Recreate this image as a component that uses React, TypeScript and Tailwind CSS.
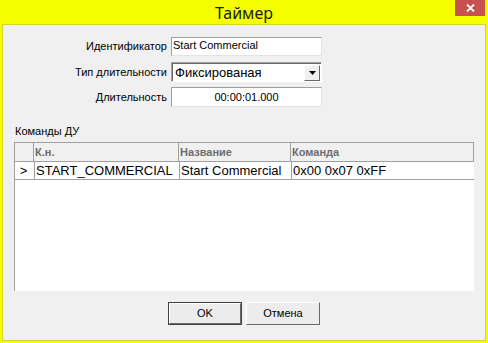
import React from "react";

const ui = { fontFamily: '"Liberation Sans", Arial, sans-serif' };

function Label({ children }: { children: React.ReactNode }) {
  return (
    <div className="w-[168px] pr-[4px] text-right text-[11px] leading-[13px] text-black" style={ui}>
      {children}
    </div>
  );
}

function Button({ label, primary = false }: { label: string; primary?: boolean }) {
  return (
    <div
      className={
        primary
          ? "h-[23px] w-[74px] border border-[#404040] bg-[#f0f0f0]"
          : "h-[23px] w-[74px]"
      }
    >
      <div className="flex h-full w-full items-center justify-center border-t border-l border-r border-b border-t-white border-l-white border-r-[#696969] border-b-[#696969] bg-[#ececec] text-[11px] text-black" style={ui}>
        {label}
      </div>
    </div>
  );
}

export default function App() {
  return (
    <div className="flex h-[343px] w-[488px] flex-col bg-[#f5ff00]" style={ui}>
      {/* title bar */}
      <div className="relative flex h-[24px] items-center justify-center">
        <span
          className="mt-[1px] text-[16px] text-[#1a1a1a]"
          style={{ fontFamily: '"Noto Sans", "Open Sans", sans-serif' }}
        >
          Таймер
        </span>
        <div className="absolute right-[3px] top-0 flex h-[16px] w-[30px] items-center justify-center bg-[#c75050]">
          <svg width="9" height="8" viewBox="0 0 9 8">
            <path d="M1 0.5 L8 7.5 M8 0.5 L1 7.5" stroke="white" strokeWidth="1.8" />
          </svg>
        </div>
      </div>

      {/* client */}
      <div className="mx-[2px] mb-[2px] flex flex-1 flex-col border border-[#d3d62a] bg-[#f0f0f0]">
        <div className="flex flex-col pt-[12px]">
          <div className="flex h-[19px] items-center">
            <Label>Идентификатор</Label>
            <div className="h-[19px] w-[151px] border-t border-l border-r border-b border-t-[#a0a0a0] border-l-[#a0a0a0] border-r-[#e3e3e3] border-b-[#e3e3e3] bg-white pl-[1px] text-[11px] leading-[15px] text-black">
              Start Commercial
            </div>
          </div>

          <div className="mt-[6px] flex h-[20px] items-center">
            <Label>Тип длительности</Label>
            <div className="flex h-[20px] w-[151px] items-center border-t border-l border-r border-b border-t-[#a0a0a0] border-l-[#a0a0a0] border-r-white border-b-white bg-white">
              <div className="flex h-full flex-1 items-center border-t border-l border-t-[#696969] border-l-[#696969] pl-[2px] text-[13px] text-black">
                Фиксированая
              </div>
              <div className="flex h-full items-center border-t border-t-[#696969] pr-[1px]">
                <div className="flex h-[16px] w-[16px] items-center justify-center border-t border-l border-r border-b border-t-white border-l-white border-r-[#696969] border-b-[#696969] bg-[#f0f0f0]">
                  <svg width="7" height="4" viewBox="0 0 7 4">
                    <path d="M0 0 H7 L3.5 4 Z" fill="black" />
                  </svg>
                </div>
              </div>
            </div>
          </div>

          <div className="mt-[5px] flex h-[20px] items-center">
            <Label>Длительность</Label>
            <div className="flex h-[20px] w-[151px] items-center justify-center border-t border-l border-r border-b border-t-[#a0a0a0] border-l-[#a0a0a0] border-r-[#e3e3e3] border-b-[#e3e3e3] bg-white text-[11px] text-black">
              00:00:01.000
            </div>
          </div>
        </div>

        <div className="mt-[18px] pl-[12px] text-[11px] leading-[13px] text-black">Команды ДУ</div>

        {/* grid */}
        <div className="mx-[11px] mt-[4px] flex h-[149px] flex-col border-t border-l border-[#a0a0a0] bg-white">
          <div className="flex h-[19px] border-b border-r border-[#a0a0a0] bg-[#f0f0f0] text-[11px] font-bold text-[#6d6d6d]">
            <div className="w-[19px] border-r border-[#a0a0a0]" />
            <div className="flex w-[145px] items-center border-r border-[#a0a0a0] pl-[1px]">К.н.</div>
            <div className="flex w-[112px] items-center border-r border-[#a0a0a0] pl-[1px]">Название</div>
            <div className="flex flex-1 items-center pl-[1px]">Команда</div>
          </div>
          <div className="flex h-[18px] items-center border-b border-[#a0a0a0] text-[13px] text-black">
            <div className="flex h-full w-[20px] items-center justify-center border-r border-[#a0a0a0] pr-[2px]">&gt;</div>
            <div className="flex h-full w-[145px] items-center border-r border-[#a0a0a0] pl-[1px]">START_COMMERCIAL</div>
            <div className="flex h-full w-[112px] items-center border-r border-[#a0a0a0] pl-[1px]">Start Commercial</div>
            <div className="flex h-full flex-1 items-center pl-[1px]">0x00 0x07 0xFF</div>
          </div>
        </div>

        <div className="mt-[11px] flex justify-center gap-[4px]">
          <Button label="OK" primary />
          <Button label="Отмена" />
        </div>
      </div>
    </div>
  );
}
